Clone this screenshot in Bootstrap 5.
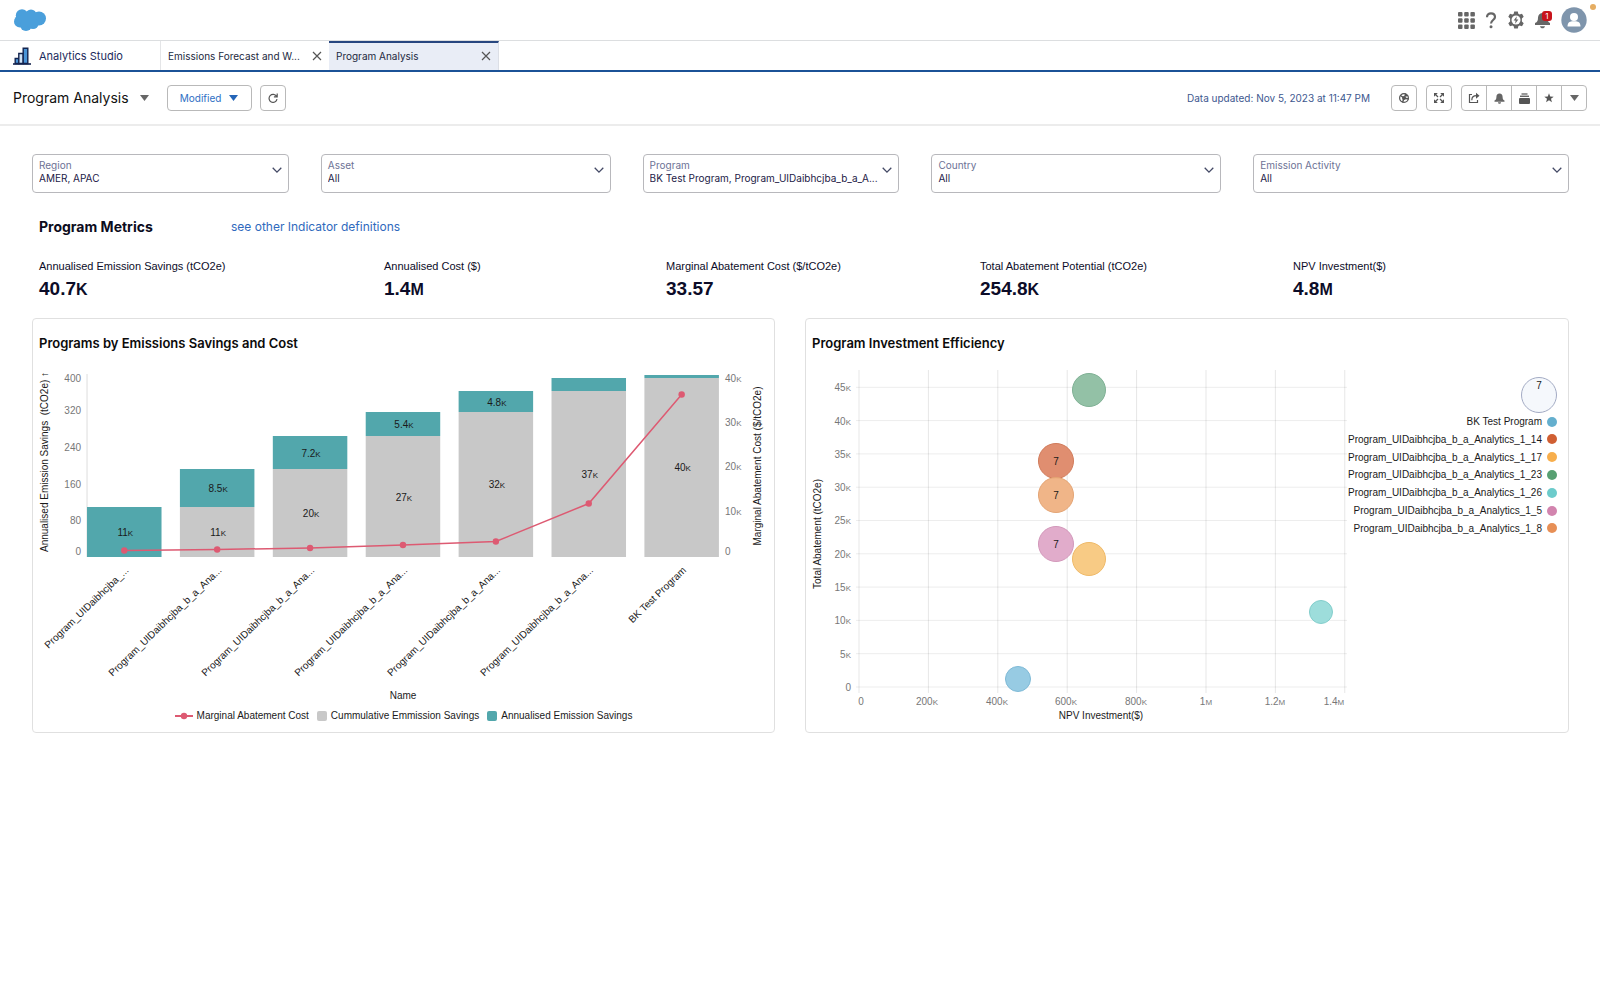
<!DOCTYPE html>
<html lang="en">
<head>
<meta charset="utf-8">
<meta name="viewport" content="width=device-width, initial-scale=1">
<title>Program Analysis</title>
<link href="https://cdn.jsdelivr.net/npm/bootstrap@5.3.0/dist/css/bootstrap.min.css" rel="stylesheet">
<style>
body{font-family:Inter,"Liberation Sans",sans-serif;font-size:11px;line-height:16px;color:#16183a;background:#fff}
button,select{font-family:inherit;color:inherit}
svg{display:block}
.plain-btn{border:0;background:none;padding:0}
.top-bar{height:41px;border-bottom:1px solid #dcdee0;padding:0 13px 0 14px}
.top-icons{gap:10px}
.bell-wrap{position:relative}
.bell-count{position:absolute;left:7px;top:-1px;width:10px;height:10px;border-radius:3px;background:#c8141c;color:#fff;font-size:8px;line-height:10px;text-align:center}
.status-dot{position:absolute;right:4px;top:4px;width:6px;height:6px;border-radius:50%;background:#e5ad62}
.tab-strip{height:31px;border-bottom:2px solid #1b5297}
.tab-strip a{color:#222840;text-decoration:none;white-space:nowrap}
.tab-strip .studio-tab{width:161px;padding-left:13px;color:#1b2a5c;border-right:1px solid #e4e5e7}
.doc-tab{width:168px;padding:0 7px 0 7px;font-size:10px}
.doc-tab.current{width:170px;background:#e9edf6;border-top:2px solid #27467f;border-right:1px solid #dcdfe6;padding-bottom:2px}
.tool-row{height:54px;border-bottom:2px solid #ececec;padding:0 13px}
.page-name{font-size:14px;line-height:20px;color:#111;gap:11px}
.tool-btn{height:26px;width:26px;border:1px solid #b9b9b9;border-radius:4px;background:#fff;padding:0;display:flex;align-items:center;justify-content:center;color:#666}
.tool-btn.modified{width:85px;margin-left:18px;color:#2e6fc4;font-size:10px;gap:8px}
.btn-group .tool-btn{border-radius:0;margin-left:-1px}
.btn-group .tool-btn:first-child{border-radius:4px 0 0 4px;margin-left:0}
.btn-group .tool-btn:last-child{border-radius:0 4px 4px 0}
.tool-end{gap:9px}
.updated{font-size:10px;color:#40588f;margin-right:12px}
.board{padding:28px 31px 0 32px}
.filters{gap:32px}
.filter-box{height:39px;border:1px solid #b8b8bc;border-radius:4px;padding:4px 6px 0 6px;flex-basis:0;min-width:0}
.w-s{flex-grow:243}.w-m{flex-grow:276}.w-l{flex-grow:302}
.filter-box label{display:block;font-size:10px;line-height:13px;color:#6d7295}
.filter-box select{display:block;appearance:none;border:0;background:none;padding:0;width:100%;font-size:10px;line-height:13px;height:13px;color:#1c2046}
.filter-box svg{margin-top:7px;flex:none}
.inset{margin-left:7px}
.metrics-title{font-size:14px;line-height:20px;font-weight:700;width:192px;margin:0;color:#0c0c20}
.see-link{font-size:12px;line-height:20px;color:#2f69bd;text-decoration:none}
.kpi-row{margin-top:21px}
.kpi{font-family:"Liberation Sans",sans-serif;flex-basis:0;color:#0c0c28}
.kpi dt{font-weight:400;font-size:11px;line-height:16px}
.kpi dd{font-weight:700;font-size:19px;line-height:24px;margin:3px 0 0}
.kpi small{font-size:16px}
.k1{flex-grow:345}.k2{flex-grow:282}.k3{flex-grow:314}.k4{flex-grow:313}.k5{flex-grow:276}
.panels{gap:30px;margin-top:16px}
.panel-box{border:1px solid #e0e0e0;border-radius:4px;flex-basis:0;min-width:0;height:415px;padding-top:14px}
.p-left{flex-grow:743}.p-right{flex-grow:764}
.panel-box h2{font-size:13px;line-height:20px;font-weight:600;margin:0 0 12px 6px;color:#0b0b0b}
.plot text,.key{font-family:"Liberation Sans",sans-serif;font-size:10px;fill:#1a1a1a;color:#1a1a1a}
.plot .tick{fill:#777}
.plot tspan{font-size:8px}
.key{line-height:16px}
.swatch{width:10px;height:10px;border-radius:2px}
.plot-col{flex:544 1 0;min-width:0}
.legend-col{flex:207 1 0;min-width:0;padding:12px 11px 0 0}
.legend-col ul{height:124px}
.legend-col li{line-height:17px;gap:5px;white-space:nowrap}
.legend-col .dot{width:10px;height:10px;border-radius:50%;flex:none}
.size-key{width:36px;height:36px;border:1px solid #a3abc4;border-radius:50%;background:#f5f8fc;line-height:16px;text-align:center}
</style>
</head>
<body>
<header>
<div class="top-bar d-flex align-items-center justify-content-between">
  <a href="#" aria-label="Home"><svg width="33" height="24" viewBox="0 0 33 24" fill="#4a9fdb"><circle cx="8" cy="7.500" r="6.200"/><circle cx="17" cy="7" r="5.500"/><circle cx="25" cy="10.500" r="7"/><circle cx="6" cy="13.500" r="6"/><circle cx="12" cy="17" r="6"/><circle cx="19" cy="15.500" r="5.600"/><path d="M8 5h14v12H8z"/></svg></a>
  <div class="top-icons d-flex align-items-center">
    <button class="plain-btn" aria-label="App launcher"><svg width="17" height="17" viewBox="0 0 17 17" fill="#666"><g id="w"><rect width="4.500" height="4.500" rx="1"/><rect x="6.200" width="4.500" height="4.500" rx="1"/><rect x="12.400" width="4.500" height="4.500" rx="1"/></g><use href="#w" y="6.200"/><use href="#w" y="12.400"/></svg></button>
    <button class="plain-btn" aria-label="Help"><svg width="12" height="17" viewBox="0 0 12 17"><path d="M2 5.200C2 2.600 3.700 1.300 6 1.300s4 1.400 4 3.700c0 2.800-4 3.200-4 6.400" fill="none" stroke="#666" stroke-width="2.200"/><circle cx="6" cy="14.800" r="1.500" fill="#666"/></svg></button>
    <button class="plain-btn" aria-label="Setup"><svg width="18" height="18" viewBox="0 0 18 18"><path d="M7.200.5h3.600l.5 2.300 1.200.8 2.500-.8 1.700 3-1.800 1.700v3l1.800 1.700-1.700 3-2.500-.8-1.200.8-.5 2.300H7.200l-.5-2.300-1.200-.8-2.500.8-1.700-3 1.800-1.700v-3L1.300 5.800l1.700-3 2.500.8 1.200-.8z" fill="#666"/><circle cx="9" cy="9" r="4.500" fill="#fff"/><path d="M9.800 5.300 6.600 9.500h2l-.5 3.200 3.300-4.300H9.300z" fill="#666"/></svg></button>
    <button class="plain-btn bell-wrap" aria-label="Notifications"><svg width="16" height="17" viewBox="0 0 16 17" fill="#666"><path d="M8 1c3 0 4.500 2 4.500 4.500 0 3 .5 4.500 2.500 5.500v2H0v-2c2.500-1 3-2.500 3-5.500C3 3 5 1 8 1zM5 14.200h5c-.4 1.600-1.300 2-2.500 2S5.400 15.800 5 14.200z"/></svg><span class="bell-count">1</span></button>
    <button class="plain-btn" aria-label="Profile"><svg width="26" height="26" viewBox="0 0 26 26"><circle cx="13" cy="13" r="12.700" fill="#7f95ac"/><circle cx="13" cy="10" r="4" fill="#fff"/><path d="M6.500 19.500c0-3.500 2-5 4.500-5.200h4c2.500.2 4.500 1.700 4.500 5.200z" fill="#fff"/></svg></button>
  </div>
  <span class="status-dot"></span>
</div>
<nav class="tab-strip d-flex">
  <a href="#" class="studio-tab d-flex align-items-center gap-2"><svg width="18" height="18" viewBox="0 0 18 18"><g fill="#4a95d8" stroke="#14244f" stroke-width="1.400"><path d="M2.200 16.500v-5h3.600v5z"/><path d="M5.800 16.500V6.500h4.400v10z" fill="#cfe3f6"/><path d="M10.200 16.500V1.200h4.600v15.300z"/></g><path d="M0 17h18" stroke="#14244f" stroke-width="1.600"/></svg>Analytics Studio</a>
  <div class="doc-tab d-flex align-items-center justify-content-between"><a href="#">Emissions Forecast and W...</a><button class="plain-btn" aria-label="Close tab"><svg width="10" height="10" viewBox="0 0 10 10"><path d="m1 1 8 8M9 1 1 9" stroke="#555" stroke-width="1.200"/></svg></button></div>
  <div class="doc-tab current d-flex align-items-center justify-content-between"><a href="#">Program Analysis</a><button class="plain-btn" aria-label="Close tab"><svg width="10" height="10" viewBox="0 0 10 10"><path d="m1 1 8 8M9 1 1 9" stroke="#555" stroke-width="1.200"/></svg></button></div>
</nav>
<div class="tool-row d-flex align-items-center">
  <button class="plain-btn page-name d-flex align-items-center">Program Analysis<svg width="9" height="6" viewBox="0 0 9 6"><path d="M0 0h9L4.500 6z" fill="#666"/></svg></button>
  <button class="tool-btn modified">Modified<svg width="9" height="6" viewBox="0 0 9 6"><path d="M0 0h9L4.500 6z" fill="#2465b8"/></svg></button>
  <button class="tool-btn ms-2" aria-label="Refresh"><svg width="10" height="10" viewBox="0 0 10 10" fill="none" stroke="#555" stroke-width="1.200"><path d="M8.500 3.300A4 4 0 1 0 9 6.200M9.200.5v3.300H5.900"/></svg></button>
  <div class="tool-end d-flex align-items-center ms-auto">
  <span class="updated">Data updated: Nov 5, 2023 at 11:47 PM</span>
  <button class="tool-btn" aria-label="Explore"><svg width="12" height="12" viewBox="0 0 12 12"><circle cx="6" cy="6" r="4.400" fill="none" stroke="#555" stroke-width="1.200"/><path d="M6 6 2.500 3.500M6 6l4.500 1M6 6 4.500 10.500" stroke="#555" stroke-width="1.400"/><circle cx="6" cy="6" r="2" fill="#555"/><path d="M6 5 7 1.200 10.500 4z" fill="#555"/></svg></button>
  <button class="tool-btn" aria-label="Full screen"><svg width="12" height="12" viewBox="0 0 12 12" fill="#555"><g id="c"><path d="M1 1h3.800L1 4.800z"/><path d="m2 2 3 3" stroke="#555" stroke-width="1.300"/></g><use href="#c" transform="rotate(90 6 6)"/><use href="#c" transform="rotate(180 6 6)"/><use href="#c" transform="rotate(270 6 6)"/></svg></button>
  <div class="btn-group" role="group" aria-label="Dashboard actions">
    <button class="tool-btn" aria-label="Share"><svg width="12" height="12" viewBox="0 0 12 12"><path d="M4 2.500H1.500v8h8V8M3.800 8.200C3.800 5 5.500 3.700 8.500 3.700" fill="none" stroke="#555" stroke-width="1.200"/><path d="M8 .8 11.500 3.800 8 6.800z" fill="#555"/></svg></button>
    <button class="tool-btn" aria-label="Notify"><svg width="11" height="11" viewBox="0 0 11 11" fill="#666"><path d="M5.500.5C7.600.5 8.600 2 8.600 4c0 2 .5 3 1.900 3.500v1.300H.5V7.500C1.900 7 2.400 6 2.400 4c0-2 1-3.500 3.100-3.500zM4 9.300h3c0 2-3 2-3 0z"/></svg></button>
    <button class="tool-btn" aria-label="Collections"><svg width="11" height="11" viewBox="0 0 11 11" fill="#555"><rect y="5" width="11" height="6" rx="1"/><rect x="1" y="2.600" width="9" height="1.300"/><rect x="2.500" y=".4" width="6" height="1.200"/></svg></button>
    <button class="tool-btn" aria-label="Favorite"><svg width="10" height="10" viewBox="0 0 10 10"><path d="m5 .3 1.200 3.300 3.500.1L7 5.800l.9 3.400L5 7.300 2.100 9.200 3 5.800.3 3.700l3.500-.1z" fill="#555"/></svg></button>
    <button class="tool-btn" aria-label="More"><svg width="9" height="6" viewBox="0 0 9 6"><path d="M0 0h9L4.500 6z" fill="#666"/></svg></button>
  </div>
  </div>
</div>
</header>
<main class="board">
<form class="filters d-flex">
  <div class="filter-box w-s d-flex"><div class="flex-grow-1"><label for="f1">Region</label><select id="f1"><option>AMER, APAC</option></select></div><svg width="10" height="8" viewBox="0 0 10 8"><path d="m.7 1.800 4.300 4.300 4.300-4.300" fill="none" stroke="#444a66" stroke-width="1.300"/></svg></div>
  <div class="filter-box w-m d-flex"><div class="flex-grow-1"><label for="f2">Asset</label><select id="f2"><option>All</option></select></div><svg width="10" height="8" viewBox="0 0 10 8"><path d="m.7 1.800 4.300 4.300 4.300-4.300" fill="none" stroke="#444a66" stroke-width="1.300"/></svg></div>
  <div class="filter-box w-s d-flex"><div class="flex-grow-1"><label for="f3">Program</label><select id="f3"><option>BK Test Program, Program_UIDaibhcjba_b_a_A...</option></select></div><svg width="10" height="8" viewBox="0 0 10 8"><path d="m.7 1.800 4.300 4.300 4.300-4.300" fill="none" stroke="#444a66" stroke-width="1.300"/></svg></div>
  <div class="filter-box w-m d-flex"><div class="flex-grow-1"><label for="f4">Country</label><select id="f4"><option>All</option></select></div><svg width="10" height="8" viewBox="0 0 10 8"><path d="m.7 1.800 4.300 4.300 4.300-4.300" fill="none" stroke="#444a66" stroke-width="1.300"/></svg></div>
  <div class="filter-box w-l d-flex"><div class="flex-grow-1"><label for="f5">Emission Activity</label><select id="f5"><option>All</option></select></div><svg width="10" height="8" viewBox="0 0 10 8"><path d="m.7 1.800 4.300 4.300 4.300-4.300" fill="none" stroke="#444a66" stroke-width="1.300"/></svg></div>
</form>
<div class="inset d-flex mt-4"><h1 class="metrics-title">Program Metrics</h1><a href="#" class="see-link">see other Indicator definitions</a></div>
<div class="inset kpi-row d-flex">
  <dl class="kpi k1 mb-0"><dt>Annualised Emission Savings (tCO2e)</dt><dd>40.7<small>K</small></dd></dl>
  <dl class="kpi k2 mb-0"><dt>Annualised Cost ($)</dt><dd>1.4<small>M</small></dd></dl>
  <dl class="kpi k3 mb-0"><dt>Marginal Abatement Cost ($/tCO2e)</dt><dd>33.57</dd></dl>
  <dl class="kpi k4 mb-0"><dt>Total Abatement Potential (tCO2e)</dt><dd>254.8<small>K</small></dd></dl>
  <dl class="kpi k5 mb-0"><dt>NPV Investment($)</dt><dd>4.8<small>M</small></dd></dl>
</div>
<div class="panels d-flex">
  <section class="panel-box p-left">
    <h2>Programs by Emissions Savings and Cost</h2>
    <svg class="plot w-100" id="bars" viewBox="0 0 741 343" role="img" aria-label="Programs by emissions savings and cost"></svg>
    <div class="key d-flex justify-content-center align-items-center gap-2">
      <span class="d-flex align-items-center gap-1"><svg width="18" height="8" viewBox="0 0 18 8"><path d="M0 4h18" stroke="#dd5a72" stroke-width="2"/><circle cx="9" cy="4" r="3.200" fill="#dd5a72"/></svg>Marginal Abatement Cost</span>
      <span class="d-flex align-items-center gap-1"><i class="swatch" style="background:#c8c8c8"></i>Cummulative Emmission Savings</span>
      <span class="d-flex align-items-center gap-1"><i class="swatch" style="background:#52a7ac"></i>Annualised Emission Savings</span>
    </div>
  </section>
  <section class="panel-box p-right">
    <h2>Program Investment Efficiency</h2>
    <div class="d-flex align-items-start">
      <div class="plot-col"><svg class="plot w-100" id="bubbles" viewBox="0 0 544 360" role="img" aria-label="Program investment efficiency"></svg></div>
      <div class="legend-col key">
        <div class="size-key ms-auto">7</div>
        <ul class="list-unstyled m-0 d-flex flex-column justify-content-between" id="legend"></ul>
      </div>
    </div>
  </section>
</div>
</main>
<script src="https://cdn.jsdelivr.net/npm/bootstrap@5.3.0/dist/js/bootstrap.bundle.min.js"></script>
<script>
// Unit letters (K, M) are set smaller than the figures before them
const unit = s => s.replace(/(\d)([KM])$/, '$1<tspan>$2</tspan>');
const txt = (x, y, s, anchor = 'middle', cls = '', extra = '') =>
  `<text x="${x}" y="${y}" text-anchor="${anchor}" class="${cls}" ${extra}>${unit(s)}</text>`;

// Stacked bars: pixel height of the total and of the cumulative part
(function () {
  const base = 192, x0 = 54, step = 92.9, w = 74.500;
  const tops = [142, 104, 71, 47, 26, 13, 10];
  const greyLabel = [null, ['11K', 171], ['20K', 152], ['27K', 136], ['32K', 123], ['37K', 113], ['40K', 106]];
  const tealLabel = [['11K', 171], ['8.5K', 127], ['7.2K', 92], ['5.4K', 63], ['4.8K', 41], null, null];
  const line = [185.500, 184.500, 183, 180, 176.500, 138.500, 29.500];
  let o = `<path d="M${x0} 9V${base}" stroke="#ddd"/>`;
  tops.forEach((t, i) => {
    const x = x0 + i * step, g = i ? tops[i - 1] : base;
    if (i) o += `<rect x="${x}" y="${g}" width="${w}" height="${base - g}" fill="#c8c8c8"/>`;
    o += `<rect x="${x}" y="${t}" width="${w}" height="${g - t}" fill="#52a7ac"/>`;
  });
  const pts = line.map((y, i) => [x0 + i * step + w / 2, y]);
  o += `<polyline points="${pts.join(' ')}" fill="none" stroke="#dd5a72" stroke-width="1.500"/>`;
  pts.forEach(p => o += `<circle cx="${p[0]}" cy="${p[1]}" r="3.200" fill="#dd5a72"/>`);
  [greyLabel, tealLabel].forEach(set => set.forEach((l, i) => { if (l) o += txt(pts[i][0] + 1, l[1], l[0]); }));
  [['400', 17], ['320', 49], ['240', 86], ['160', 123], ['80', 159], ['0', 190]].forEach(t => o += txt(48, t[1], t[0], 'end', 'tick'));
  [['40K', 17], ['30K', 61], ['20K', 105], ['10K', 150], ['0', 190]].forEach(t => o += txt(692, t[1], t[0], 'start', 'tick'));
  const long = 'Program_UIDaibhcjba_b_a_Ana...';
  ['Program_UIDaibhcjba_...', long, long, long, long, long, 'BK Test Program'].forEach((s, i) => {
    const x = pts[i][0] + 5;
    o += txt(x, 206, s, 'end', '', `transform="rotate(-44 ${x} 206)"`);
  });
  o += txt(15, 97, 'Annualised Emission Savings \u00a0(tCO2e) \u2191', 'middle', '', 'transform="rotate(-90 15 97)"');
  o += txt(728, 101, 'Marginal Abatement Cost ($/tCO2e)', 'middle', '', 'transform="rotate(-90 728 101)"');
  o += txt(370, 334, 'Name');
  document.getElementById('bars').innerHTML = o;
})();

// Bubble chart
(function () {
  let o = '';
  for (let i = 0; i < 8; i++) o += `<path d="M${53 + i * 69.400} 5V328" stroke="#000" stroke-opacity=".1"/>`;
  for (let i = 0; i < 10; i++) {
    const y = 322 - i * 33.300;
    o += `<path d="M50 ${y}H541" stroke="#000" stroke-opacity=".08"/>` + txt(45, y + 4, i ? i * 5 + 'K' : '0', 'end', 'tick');
  }
  [['0', 55], ['200K', 121], ['400K', 191], ['600K', 260], ['800K', 330], ['1M', 400], ['1.2M', 469], ['1.4M', 528]].forEach(t => o += txt(t[1], 340, t[0], 'middle', 'tick'));
  [[283, 25, 17, '#8fbfa3', '#7eb094'], [250, 96, 18, '#df8a6b', '#d07a5a'], [250, 130, 18, '#f0b384', '#e3a473'],
   [250, 179, 18, '#e0a9c9', '#d298ba'], [283, 194, 17, '#f8c981', '#eeb967'], [212, 314, 13, '#94c9e2', '#7db9d6'], [515, 247, 12, '#9adcda', '#82cdcb']]
    .forEach(b => o += `<circle cx="${b[0]}" cy="${b[1]}" r="${b[2] - .5}" fill="${b[3]}" fill-opacity=".97" stroke="${b[4]}"/>` + (b[2] === 18 ? txt(b[0], b[1] + 4, '7') : ''));
  o += txt(295, 354, 'NPV Investment($)');
  o += txt(15, 169, 'Total Abatement (tCO2e)', 'middle', '', 'transform="rotate(-90 15 169)"');
  document.getElementById('bubbles').innerHTML = o;
  const p = 'Program_UIDaibhcjba_b_a_Analytics_1_';
  document.getElementById('legend').innerHTML = [['BK Test Program', '#64afce'], [p + '14', '#d05f33'], [p + '17', '#f7ae4c'], [p + '23', '#57a072'], [p + '26', '#6ccbcb'], [p + '5', '#d284ae'], [p + '8', '#e78f56']]
    .map(r => `<li class="d-flex align-items-center justify-content-end">${r[0]}<span class="dot" style="background:${r[1]}"></span></li>`).join('');
})();
</script>
</body>
</html>
